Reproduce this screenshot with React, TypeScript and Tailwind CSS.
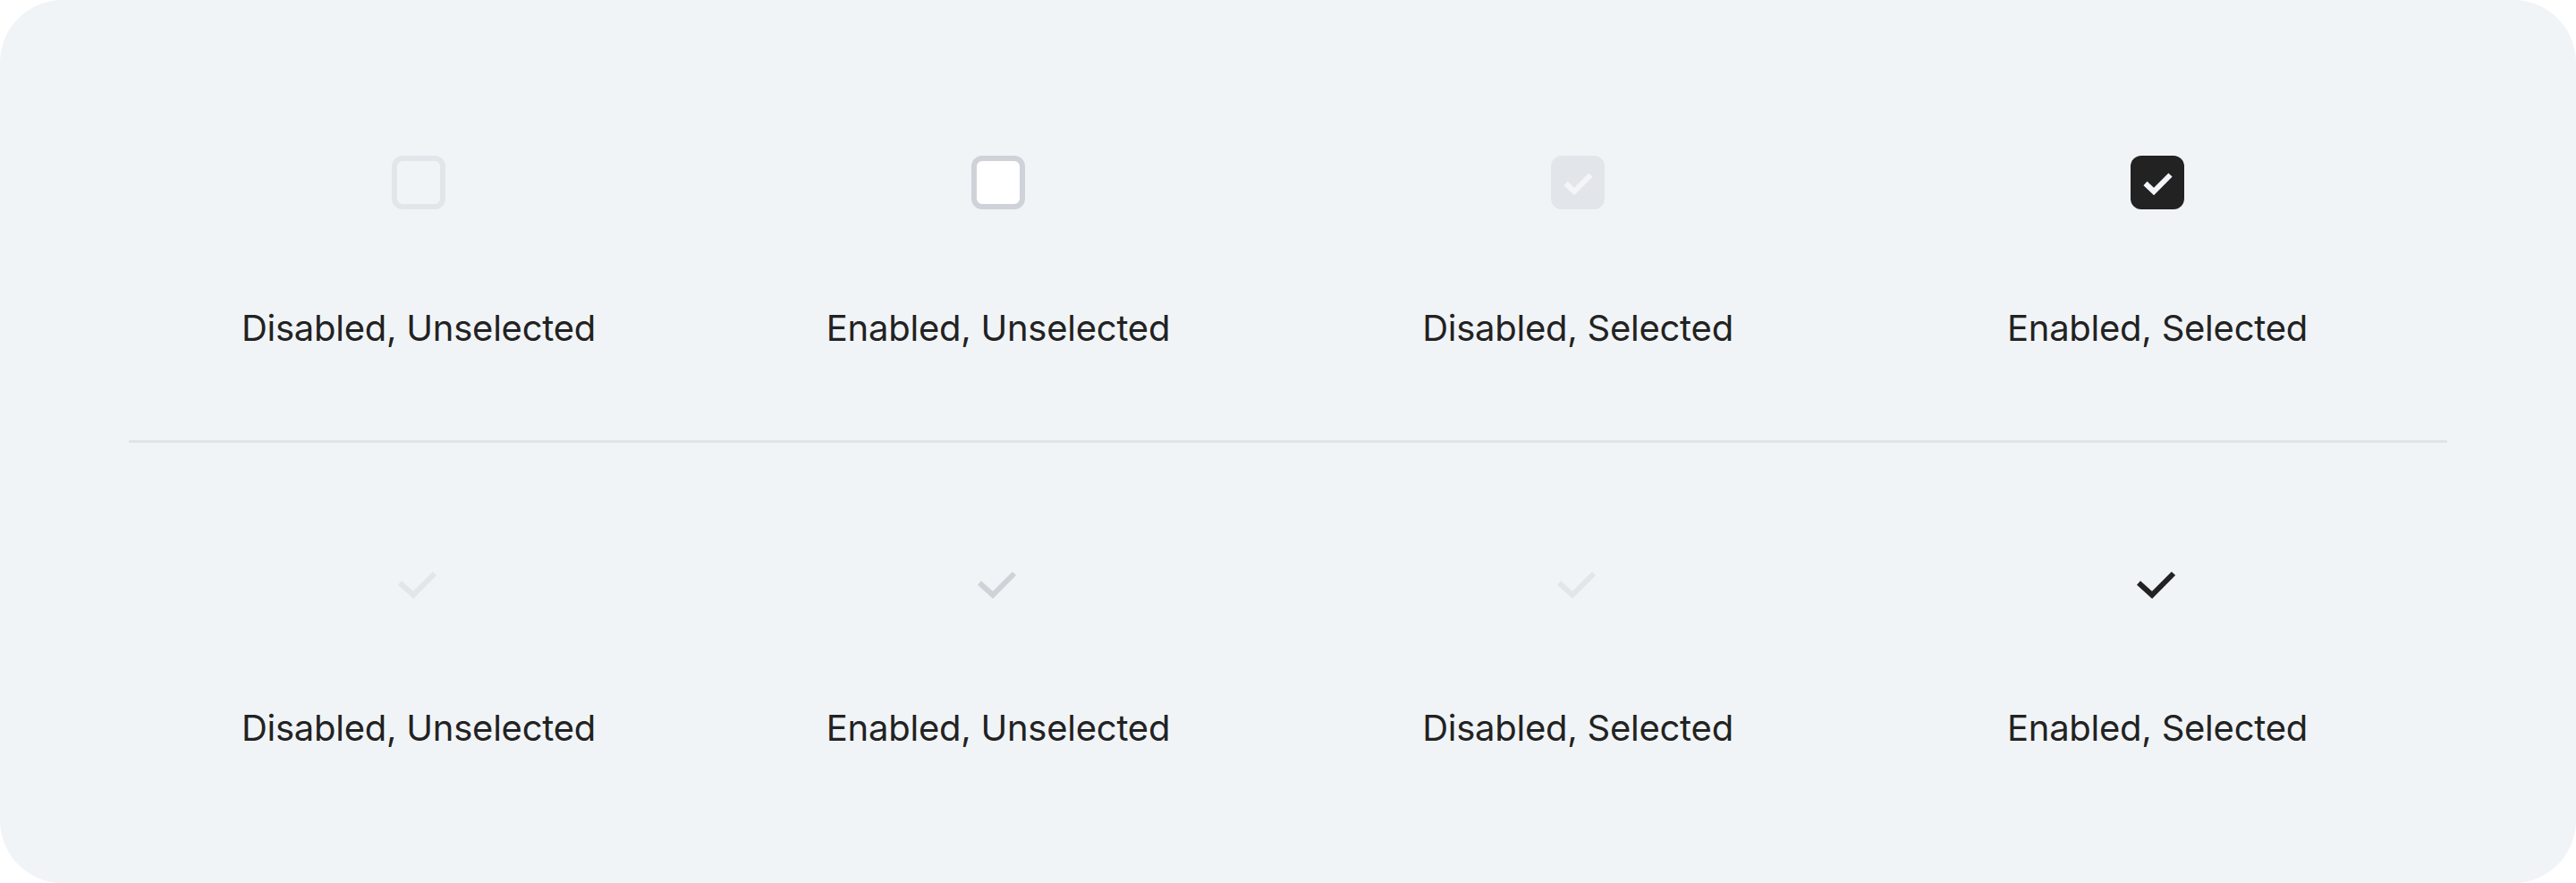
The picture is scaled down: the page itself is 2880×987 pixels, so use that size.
import React from 'react'

type State = { label: string; disabled: boolean; selected: boolean }

const states: State[] = [
  { label: 'Disabled, Unselected', disabled: true, selected: false },
  { label: 'Enabled, Unselected', disabled: false, selected: false },
  { label: 'Disabled, Selected', disabled: true, selected: true },
  { label: 'Enabled, Selected', disabled: false, selected: true },
]

function BoxCheck({ s }: { s: State }) {
  if (!s.selected) {
    return (
      <div
        className={
          'w-[60px] h-[60px] rounded-[12px] border-[6px] ' +
          (s.disabled ? 'border-[#e2e5ea] bg-transparent' : 'border-[#cfd3d9] bg-white')
        }
      />
    )
  }
  return (
    <div
      className={
        'w-[60px] h-[60px] rounded-[12px] flex items-center justify-center ' +
        (s.disabled ? 'bg-[#e2e5ea]' : 'bg-[#222222]')
      }
    >
      <svg width="60" height="60" viewBox="0 0 60 60" fill="none">
        <path d="M16.5 31 L26 40 L44.5 21.5" stroke="#f3f5f8" strokeWidth="6" />
      </svg>
    </div>
  )
}

function PlainCheck({ s }: { s: State }) {
  let color = '#e2e5ea'
  if (!s.disabled) color = s.selected ? '#222222' : '#cfd3d9'
  return (
    <svg width="48" height="48" viewBox="0 0 48 48" fill="none">
      <path d="M3 22.5 L18 36 L42 12" stroke={color} strokeWidth="6" />
    </svg>
  )
}

export default function App() {
  return (
    <div className="w-[2880px] h-[987px] bg-white">
      <div
        className="w-full h-full rounded-[70px] bg-[#f1f4f7] px-[144px] text-[#222222]"
        style={{ fontFamily: 'Inter, "Noto Sans", sans-serif' }}
      >
        <div className="grid grid-cols-4 pt-[174px] pb-[101px]">
          {states.map((s) => (
            <div key={s.label} className="flex flex-col items-center gap-[109px]">
              <BoxCheck s={s} />
              <span className="text-[40px] leading-[48px] tracking-[-0.25px]">{s.label}</span>
            </div>
          ))}
        </div>
        <div className="h-[3px] bg-[#e0e4ea]" />
        <div className="grid grid-cols-4 pt-[134px]">
          {states.map((s) => (
            <div key={s.label} className="flex flex-col items-center gap-[113px]">
              <PlainCheck s={s} />
              <span className="text-[40px] leading-[48px] tracking-[-0.25px]">{s.label}</span>
            </div>
          ))}
        </div>
      </div>
    </div>
  )
}
